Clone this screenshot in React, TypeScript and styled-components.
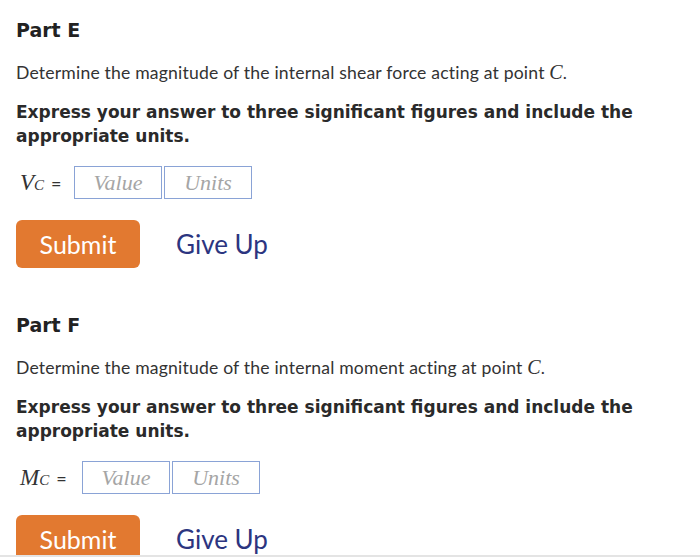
import React from "react";
import styled, { createGlobalStyle } from "styled-components";

const Global = createGlobalStyle`
  html, body { margin: 0; padding: 0; background: #fff; }
  body { width: 700px; height: 557px; overflow: hidden; }
`;

const Page = styled.div`
  width: 700px;
  height: 557px;
  box-sizing: border-box;
  padding: 0 16px;
  position: relative;
  overflow: hidden;
  border-bottom: 2px solid #e4e4e4;
`;

const Part = styled.section<{ $top: number }>`
  display: flex;
  flex-direction: column;
  padding-top: ${(p) => p.$top}px;
`;

const PartTitle = styled.h2`
  margin: 0;
  font-family: "DejaVu Sans", Verdana, sans-serif;
  font-weight: 700;
  font-size: 19px;
  line-height: 22px;
  color: #222;
`;

const Prompt = styled.p`
  margin: 20px 0 0;
  font-family: Lato, "Open Sans", sans-serif;
  font-size: 17.6px;
  letter-spacing: 0.18px;
  line-height: 22px;
  color: #333;
`;

const MathVar = styled.span`
  font-family: "Liberation Serif", "DejaVu Serif", serif;
  font-style: italic;
  font-size: 20px;
`;

const Instr = styled.p`
  margin: 16px 0 0;
  font-family: "DejaVu Sans", Verdana, sans-serif;
  font-weight: 700;
  font-size: 17px;
  line-height: 24px;
  color: #2a2a2a;
`;

const AnswerRow = styled.div`
  display: flex;
  align-items: center;
  margin-top: 18px;
  height: 33px;
`;

const Label = styled.span<{ $w: number }>`
  width: ${(p) => p.$w}px;
  padding-left: 4px;
  box-sizing: border-box;
  font-family: "Liberation Serif", "DejaVu Serif", serif;
  font-style: italic;
  font-size: 23px;
  color: #333;
  display: flex;
  align-items: baseline;
  white-space: nowrap;
`;

const Sub = styled.sub`
  font-size: 15px;
  vertical-align: -4px;
  margin-right: 7px;
`;

const Eq = styled.span`
  font-family: Lato, sans-serif;
  font-style: normal;
  font-size: 18px;
`;

const Box = styled.div`
  width: 88px;
  height: 33px;
  box-sizing: border-box;
  border: 1px solid #8aa3d6;
  margin-right: 2px;
  display: flex;
  align-items: center;
  justify-content: center;
  font-family: "Liberation Serif", serif;
  font-style: italic;
  font-size: 22px;
  color: #a5a5a5;
`;

const Actions = styled.div`
  display: flex;
  align-items: center;
  margin-top: 21px;
  gap: 36px;
`;

const SubmitButton = styled.button`
  width: 124px;
  height: 48px;
  border: none;
  border-radius: 6px;
  background: #e27930;
  color: #fff;
  font-family: Lato, "Open Sans", sans-serif;
  font-size: 25px;
  padding: 0;
  cursor: pointer;
`;

const GiveUp = styled.a`
  font-family: Lato, "Open Sans", sans-serif;
  font-size: 26px;
  color: #2c3580;
  text-decoration: none;
`;

function PartBlock(props: {
  top: number;
  title: string;
  what: string;
  symbol: string;
  labelW: number;
}) {
  return (
    <Part $top={props.top}>
      <PartTitle>{props.title}</PartTitle>
      <Prompt>
        Determine the magnitude of the internal {props.what} acting at point{" "}
        <MathVar>C</MathVar>.
      </Prompt>
      <Instr>
        Express your answer to three significant figures and include the
        appropriate units.
      </Instr>
      <AnswerRow>
        <Label $w={props.labelW}>
          {props.symbol}
          <Sub>C</Sub>
          <Eq>=</Eq>
        </Label>
        <Box>Value</Box>
        <Box>Units</Box>
      </AnswerRow>
      <Actions>
        <SubmitButton>Submit</SubmitButton>
        <GiveUp href="#">Give Up</GiveUp>
      </Actions>
    </Part>
  );
}

export default function App() {
  return (
    <>
      <Global />
      <Page>
        <PartBlock top={19} title="Part E" what="shear force" symbol="V" labelW={58} />
        <PartBlock top={46} title="Part F" what="moment" symbol="M" labelW={66} />
      </Page>
    </>
  );
}
